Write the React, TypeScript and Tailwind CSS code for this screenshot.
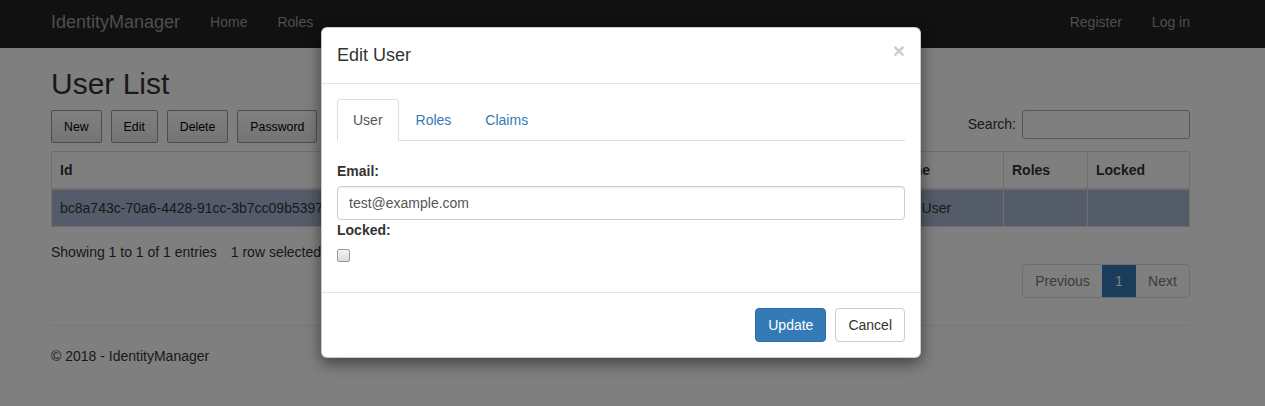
import React from "react";

const font = "font-['Liberation_Sans',Arial,sans-serif]";

function Navbar() {
  return (
    <div className="h-[48px] bg-[#222] pl-[51px]">
      <div className="flex w-[1139px] items-start pt-[12px] leading-[20px]">
        <span className="text-[18px] text-[#9d9d9d]">IdentityManager</span>
        <span className="ml-[30px] text-[14px] text-[#9d9d9d]">Home</span>
        <span className="ml-[30px] text-[14px] text-[#9d9d9d]">Roles</span>
        <div className="ml-auto flex text-[14px] text-[#9d9d9d]">
          <span>Register</span>
          <span className="ml-[30px]">Log in</span>
        </div>
      </div>
    </div>
  );
}

const tools = ["New", "Edit", "Delete", "Password"];

function UserList() {
  return (
    <div className="pl-[51px] text-[14px] leading-[20px] text-[#333]">
      <div className="w-[1139px]">
        <h2 className="mt-[19px] text-[30px] leading-[33px]">User List</h2>
        <div className="mt-[10px] flex items-start">
          <div className="flex gap-[9px]">
            {tools.map((t) => (
              <div
                key={t}
                className="flex h-[33px] items-center rounded-[2px] border border-[#999] bg-gradient-to-b from-white to-[#e9e9e9] px-[12px] text-[12.3px] text-black"
              >
                {t}
              </div>
            ))}
          </div>
          <div className="ml-auto flex items-center">
            <span className="mt-[-2px]">Search:</span>
            <div className="ml-[6px] h-[29px] w-[168px] rounded-[3px] border border-[#aaa] bg-white" />
          </div>
        </div>

        <table className="mt-[8px] w-[1138px] table-fixed border-collapse border border-[#ddd]">
          <thead>
            <tr className="text-left font-bold">
              <th className="w-[469px] border border-b-2 border-[#ddd] px-[8px] py-[8px]">Id</th>
              <th className="w-[363px] border border-b-2 border-[#ddd] px-[8px] py-[8px]">Email</th>
              <th className="w-[120px] border border-b-2 border-[#ddd] px-[8px] py-[8px]">Name</th>
              <th className="w-[84px] border border-b-2 border-[#ddd] px-[8px] py-[8px]">Roles</th>
              <th className="w-[102px] border border-b-2 border-[#ddd] px-[8px] py-[8px]">Locked</th>
            </tr>
          </thead>
          <tbody>
            <tr className="bg-[#a9b7d3]">
              <td className="border border-[#ddd] px-[8px] py-[8px]">bc8a743c-70a6-4428-91cc-3b7cc09b5397</td>
              <td className="border border-[#ddd] px-[8px] py-[8px]">test@example.com</td>
              <td className="border border-[#ddd] px-[8px] py-[8px]">Test User</td>
              <td className="border border-[#ddd] px-[8px] py-[8px]"></td>
              <td className="border border-[#ddd] px-[8px] py-[8px]"></td>
            </tr>
          </tbody>
        </table>

        <div className="flex items-start">
          <div className="pt-[15px]">
            Showing 1 to 1 of 1 entries<span className="ml-[14px]">1 row selected</span>
          </div>
          <div className="ml-auto mt-[37px] flex h-[34px] rounded-[4px] border border-[#ddd] text-[#777]">
            <div className="flex w-[79px] items-center justify-center">Previous</div>
            <div className="flex w-[34px] items-center justify-center bg-[#337ab7] text-white">1</div>
            <div className="flex w-[53px] items-center justify-center">Next</div>
          </div>
        </div>

        <div className="mt-[27px] border-t border-[#eee]" />
        <p className="mt-[20px]">© 2018 - IdentityManager</p>
      </div>
    </div>
  );
}

function EditUserModal() {
  return (
    <div className="absolute left-[321px] top-[27px] w-[600px] rounded-[6px] border border-black/20 bg-white text-[14px] leading-[20px] text-[#333] shadow-[0_5px_15px_rgba(0,0,0,0.5)]">
      <div className="flex items-start justify-between border-b border-[#e5e5e5] px-[15px] pb-[15px] pt-[15px]">
        <h4 className="text-[18px] leading-[25px]">Edit User</h4>
        <span className="mt-[-3px] text-[21px] font-bold leading-[21px] text-[#ccc]">×</span>
      </div>

      <div className="px-[15px] pb-[15px] pt-[15px]">
        <div className="flex border-b border-[#ddd]">
          <div className="-mb-px flex h-[42px] items-center rounded-t-[4px] border border-[#ddd] border-b-white bg-white px-[15px] text-[#555]">
            User
          </div>
          <div className="ml-[2px] flex h-[41px] items-center px-[15px] text-[#337ab7]">Roles</div>
          <div className="ml-[4px] flex h-[41px] items-center px-[15px] text-[#337ab7]">Claims</div>
        </div>

        <div className="pt-[20px]">
          <div className="font-bold">Email:</div>
          <div className="mt-[5px] flex h-[34px] items-center rounded-[4px] border border-[#ccc] px-[11px] text-[#555] shadow-[inset_0_1px_1px_rgba(0,0,0,0.075)]">
            test@example.com
          </div>
          <div className="font-bold">Locked:</div>
          <div className="mb-[15px] mt-[9px] h-[13px] w-[13px] rounded-[2px] border border-[#999] bg-gradient-to-b from-[#f2f2f2] to-[#dcdcdc]" />
        </div>
      </div>

      <div className="flex justify-end gap-[9px] border-t border-[#e5e5e5] p-[15px]">
        <div className="flex h-[34px] items-center rounded-[4px] border border-[#2e6da4] bg-[#337ab7] px-[12px] text-white">
          Update
        </div>
        <div className="flex h-[34px] items-center rounded-[4px] border border-[#ccc] bg-white px-[12px] text-[#333]">
          Cancel
        </div>
      </div>
    </div>
  );
}

export default function App() {
  return (
    <div className={`relative h-[406px] w-[1265px] overflow-hidden bg-white ${font}`}>
      <Navbar />
      <UserList />
      <div className="absolute inset-0 bg-black/50" />
      <EditUserModal />
    </div>
  );
}
